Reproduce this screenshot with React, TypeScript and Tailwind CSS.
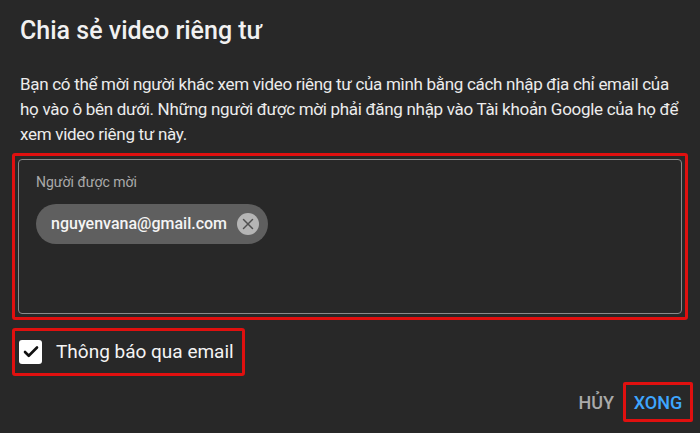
import { Check, X } from "lucide-react";

export default function App() {
  return (
    <div className="w-[700px] h-[433px] bg-[#282828] text-white font-['Roboto',sans-serif] overflow-hidden flex flex-col">
      {/* Title */}
      <h1 className="pl-5 pt-[15px] text-[25px] leading-[32px] font-medium text-[#f1f1f1]">
        Chia sẻ video riêng tư
      </h1>

      {/* Description */}
      <p className="ml-5 w-[660px] mt-[25px] text-[17px] leading-[25px] tracking-[-0.3px] text-[#ececec]">
        Bạn có thể mời người khác xem video riêng tư của mình bằng cách nhập địa chỉ email của
        họ vào ô bên dưới. Những người được mời phải đăng nhập vào Tài khoản Google của họ để
        xem video riêng tư này.
      </p>

      {/* Invitees field (highlighted) */}
      <div className="mt-[6px] ml-3 w-[676px] h-[167px] border-[3px] border-[#e0100f] rounded-[3px] p-[3px]">
        <div className="h-full border border-[#8a8a8a] rounded-[4px] pl-[17px] pt-[12px]">
          <div className="text-[14px] leading-[20px] text-[#aaaaaa]">Người được mời</div>
          <div className="mt-[12px] inline-flex items-center h-[40px] rounded-full bg-[#5f5f5f] pl-[15px] pr-[9px] gap-[10px]">
            <span className="text-[16px] font-medium text-[#f4f4f4]">nguyenvana@gmail.com</span>
            <span className="w-[22px] h-[22px] rounded-full bg-[#b5b5b5] flex items-center justify-center">
              <X size={18} strokeWidth={2} className="text-[#505050]" />
            </span>
          </div>
        </div>
      </div>

      {/* Email notification checkbox (highlighted) */}
      <div className="mt-[8px] ml-3 w-[233px] h-[48px] border-[3px] border-[#e0100f] rounded-[3px] flex items-center pl-[4px] gap-[14px]">
        <span className="w-[23px] h-[24px] bg-white rounded-[3px] flex items-center justify-center">
          <Check size={18} strokeWidth={3.5} className="text-[#111]" />
        </span>
        <span className="text-[19px] text-[#f4f4f4]">Thông báo qua email</span>
      </div>

      {/* Actions */}
      <div className="mt-[6px] flex justify-end items-center pr-[7px] gap-[9px]">
        <button className="text-[18px] font-medium text-[#aaaaaa] uppercase">HỦY</button>
        <button className="w-[70px] h-[40px] border-[3px] border-[#e0100f] rounded-[2px] text-[18px] font-medium text-[#3ea6ff] flex items-center justify-center">
          XONG
        </button>
      </div>
    </div>
  );
}
